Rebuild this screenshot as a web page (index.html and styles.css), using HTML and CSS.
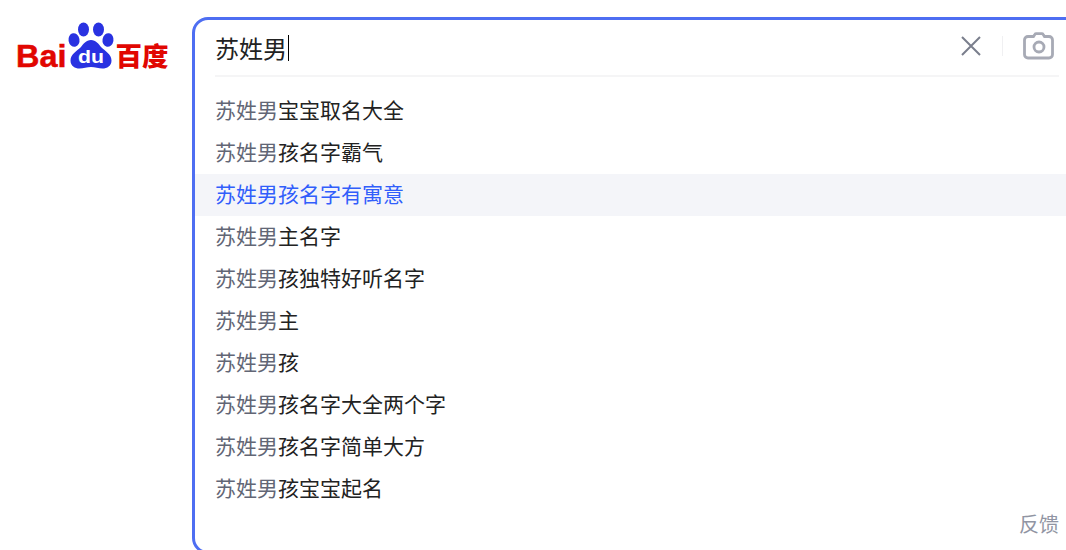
FILE: index.html
```html
<!DOCTYPE html>
<html lang="zh">
<head>
    <meta charset="UTF-8">
    <meta name="viewport" content="width=device-width, initial-scale=1.0">
    <title>百度一下</title>
    <link rel="stylesheet" href="styles.css">
</head>
<body>

    <div class="logo-col">
        <svg class="logo" width="156" height="56" viewBox="0 0 156 56">
            <text class="logo-bai" x="1" y="45" textLength="50.500" lengthAdjust="spacingAndGlyphs">Bai</text>
            <g fill="#2932e1">
                <ellipse cx="59" cy="18" rx="5.500" ry="6.800" transform="rotate(-10 59 18)"/>
                <ellipse cx="68.500" cy="7.500" rx="5.500" ry="7"/>
                <ellipse cx="83.500" cy="7.500" rx="5.500" ry="7"/>
                <ellipse cx="93" cy="18" rx="5.500" ry="6.800" transform="rotate(10 93 18)"/>
                <path d="M76 18c-5 0-7.500 4-10.500 7.500-3.500 3.500-10 6.500-10 13 0 5.500 4.500 8 9 8 4 0 7.500-1.500 11.500-1.500s7.500 1.500 11.500 1.500c4.500 0 9-2.500 9-8 0-6.500-6.500-9.500-10-13C83.500 22 81 18 76 18z"/>
            </g>
            <text class="logo-du" x="76" y="41" textLength="26" lengthAdjust="spacingAndGlyphs">du</text>
            <text class="logo-cn" x="100.500" y="44" textLength="53" lengthAdjust="spacingAndGlyphs">百度</text>
        </svg>
    </div>

    <div class="search-box">
        <div class="input-row">
            <div class="query">苏姓男<span class="caret"></span></div>
            <svg class="icon-close" width="20" height="20" viewBox="0 0 20 20">
                <path d="M1 1l18 18M19 1L1 19" fill="none" stroke="#7a7e8c" stroke-width="2"/>
            </svg>
            <span class="sep"></span>
            <svg class="icon-camera" width="32" height="28" viewBox="0 0 32 28">
                <path d="M11.500 4.500l1.300-2c.3-.5.8-.8 1.400-.8h5.600c.6 0 1.100.3 1.400.8l1.300 2h4.500c2 0 3.500 1.500 3.500 3.500v14.500c0 2-1.500 3.500-3.500 3.500h-21c-2 0-3.500-1.500-3.500-3.500V8c0-2 1.500-3.500 3.500-3.500z" fill="none" stroke="#a7aab5" stroke-width="2.800"/>
                <circle cx="17" cy="15" r="5" fill="none" stroke="#a7aab5" stroke-width="2.800"/>
            </svg>
        </div>

        <ul class="suggest">
            <li><span class="hit">苏姓男</span>宝宝取名大全</li>
            <li><span class="hit">苏姓男</span>孩名字霸气</li>
            <li class="active"><span class="hit">苏姓男</span>孩名字有寓意</li>
            <li><span class="hit">苏姓男</span>主名字</li>
            <li><span class="hit">苏姓男</span>孩独特好听名字</li>
            <li><span class="hit">苏姓男</span>主</li>
            <li><span class="hit">苏姓男</span>孩</li>
            <li><span class="hit">苏姓男</span>孩名字大全两个字</li>
            <li><span class="hit">苏姓男</span>孩名字简单大方</li>
            <li><span class="hit">苏姓男</span>孩宝宝起名</li>
        </ul>

        <div class="feedback">反馈</div>
    </div>

</body>
</html>
```

FILE: styles.css
```css
html, body {
    height: 100%;
}
body {
    margin: 0;
    display: flex;
    align-items: flex-start;
    overflow: hidden;
    background: #fff;
    font-family: "Noto Sans CJK SC", "Liberation Sans", sans-serif;
}
.logo-col {
    flex: 0 0 192px;
    padding: 22px 0 0 15px;
    box-sizing: border-box;
}
.logo {
    display: block;
}
.logo-bai {
    font-family: "Liberation Sans", sans-serif;
    font-weight: bold;
    font-size: 32px;
    fill: #e10601;
    stroke: #e10601;
    stroke-width: 0.5px;
}
.logo-du {
    font-family: "Liberation Sans", sans-serif;
    font-weight: bold;
    font-size: 18px;
    text-anchor: middle;
    fill: #fff;
}
.logo-cn {
    font-family: "Noto Sans CJK SC", sans-serif;
    font-weight: 900;
    font-size: 26px;
    fill: #e10601;
}
.search-box {
    flex: 0 0 900px;
    height: 537px;
    margin-top: 17px;
    box-sizing: border-box;
    border: 3px solid #4e6ef2;
    border-radius: 16px;
}
.input-row {
    display: flex;
    align-items: center;
    width: 844px;
    height: 55px;
    margin-left: 20px;
    border-bottom: 2px solid #f5f5f6;
}
.query {
    flex: 1;
    font-size: 24px;
    line-height: 60px;
    height: 60px;
    color: #222;
    display: flex;
    align-items: center;
}
.caret {
    width: 1px;
    height: 26px;
    margin-left: 1px;
    background: #000;
}
.icon-close {
    margin: 0 21px 3px 0;
    flex-shrink: 0;
}
.sep {
    width: 1px;
    height: 20px;
    background: #f0f0f2;
    margin: 0 19px 3px 0;
}
.icon-camera {
    margin: 0 5px 3px 0;
    flex-shrink: 0;
}
.suggest {
    list-style: none;
    margin: 13px 0 0;
    padding: 0;
}
.suggest li {
    height: 42px;
    line-height: 38px;
    padding-left: 20px;
    font-size: 21px;
    color: #222;
}
.hit {
    color: #626675;
}
.suggest .active {
    background: #f4f5f9;
    color: #315efb;
}
.suggest .active .hit {
    color: #315efb;
}
.feedback {
    width: 864px;
    text-align: right;
    font-size: 20px;
    line-height: 28px;
    color: #9195a3;
}
```
